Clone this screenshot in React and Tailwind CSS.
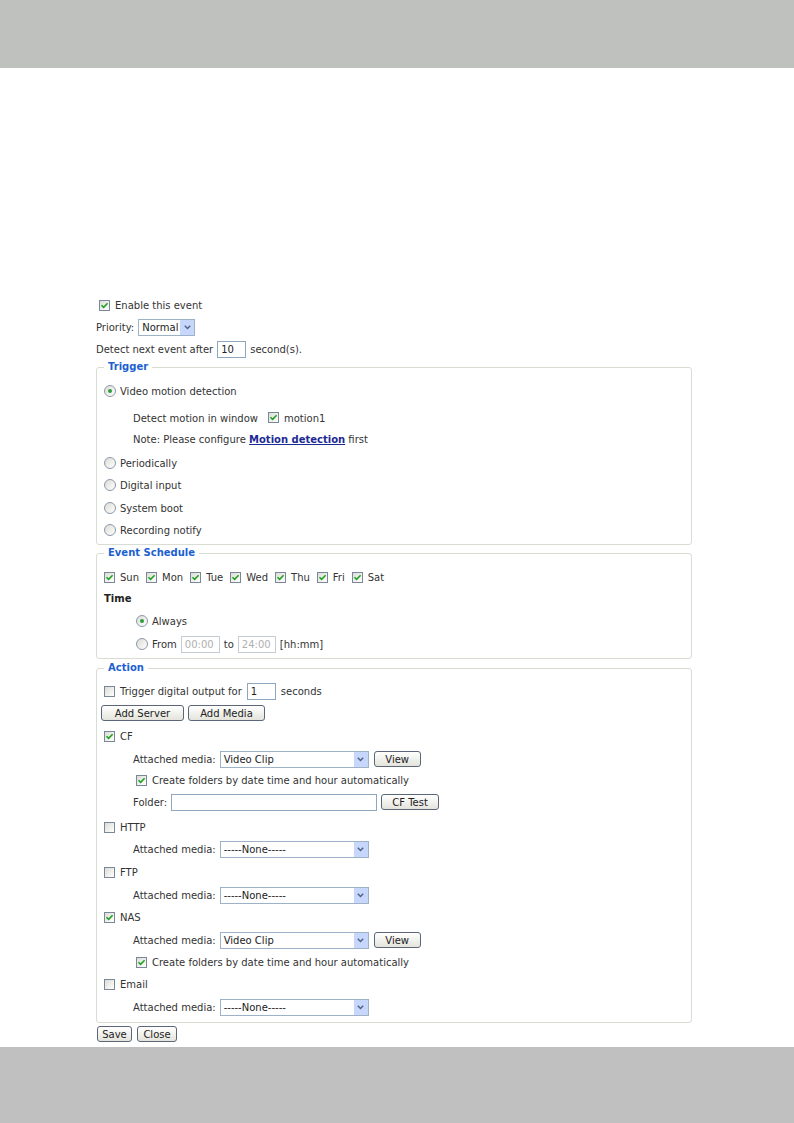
import React from 'react';

const Check = ({ checked }) => (
  <span className="inline-flex w-[11px] h-[11px] shrink-0 items-center justify-center border border-[#7a8799] bg-linear-to-br from-[#dcdcd6] to-white">
    {checked && (
      <svg width="9" height="9" viewBox="0 0 9 9">
        <path d="M1.5 4.3 L3.6 6.4 L7.6 2.2" fill="none" stroke="#21a121" strokeWidth="1.6" />
      </svg>
    )}
  </span>
);

const Radio = ({ checked }) => (
  <span className="inline-flex w-[12px] h-[12px] shrink-0 items-center justify-center rounded-full border border-[#8c98a8] bg-linear-to-br from-[#dcdcd6] to-white">
    {checked && <span className="w-[4px] h-[4px] rounded-full bg-[#2f9e3a]" />}
  </span>
);

const Select = ({ value, className }) => (
  <div className={`flex h-[17px] shrink-0 border border-[#9db1c7] bg-white ${className}`}>
    <span className="flex-1 pl-[3px] leading-[15px] text-[#222]">{value}</span>
    <span className="flex w-[15px] items-center justify-center bg-[#c6d7fb] border-l border-white">
      <svg width="7" height="5" viewBox="0 0 7 5">
        <path d="M0.8 0.8 L3.5 3.6 L6.2 0.8" fill="none" stroke="#4d6185" strokeWidth="1.4" />
      </svg>
    </span>
  </div>
);

const TextBox = ({ value, className, disabled }) => (
  <span
    className={`inline-flex h-[17px] shrink-0 items-center border bg-white pl-[3px] ${
      disabled ? 'border-[#c5ccd4] text-[#b0b0b0]' : 'border-[#8ea7bf] text-[#222]'
    } ${className}`}
  >
    {value}
  </span>
);

const Btn = ({ children, className }) => (
  <span
    className={`inline-flex h-[16px] shrink-0 items-center justify-center rounded-[3px] border border-[#5b6779] bg-linear-to-b from-white to-[#e4e4dc] text-[#222] ${className}`}
  >
    {children}
  </span>
);

const Row = ({ children, className = '' }) => (
  <div className={`flex items-center ${className}`}>{children}</div>
);

const Legend = ({ children }) => (
  <legend className="px-[4px] font-bold text-[#1b5fd1] leading-[14px]">{children}</legend>
);

const days = ['Sun', 'Mon', 'Tue', 'Wed', 'Thu', 'Fri', 'Sat'];

export default function App() {
  return (
    <div className="flex h-[1123px] flex-col bg-white font-['DejaVu_Sans',sans-serif] text-[10px] text-[#333]">
      <div className="h-[68px] bg-[#bfc1bf]" />

      <div className="flex-1 pl-[96px] pt-[226px]">
        <div className="w-[596px]">
          <Row className="h-[22px] gap-[5px] pl-[3px]">
            <Check checked />
            <span>Enable this event</span>
          </Row>
          <Row className="h-[22px] gap-[4px]">
            <span>Priority:</span>
            <Select value="Normal" className="w-[57px]" />
          </Row>
          <Row className="h-[22px] gap-[4px]">
            <span>Detect next event after</span>
            <TextBox value="10" className="w-[29px]" />
            <span>second(s).</span>
          </Row>

          <fieldset className="rounded-[3px] border border-[#d9dcd3] px-[7px] pb-[3px]">
            <Legend>Trigger</Legend>
            <Row className="mt-[6px] h-[22px] gap-[4px]">
              <Radio checked />
              <span>Video motion detection</span>
            </Row>
            <Row className="mt-[5px] h-[22px] pl-[29px]">
              <span>Detect motion in window</span>
              <span className="ml-[10px]"><Check checked /></span>
              <span className="ml-[5px]">motion1</span>
            </Row>
            <Row className="h-[20px] pl-[29px]">
              <span>
                Note: Please configure{' '}
                <span className="font-bold text-[#1c2a94] underline">Motion detection</span> first
              </span>
            </Row>
            {['Periodically', 'Digital input', 'System boot', 'Recording notify'].map((t, i) => (
              <Row key={t} className={`h-[22px] gap-[4px] ${i === 0 ? 'mt-[3px]' : i === 2 ? 'mt-[1px]' : ''}`}>
                <Radio />
                <span>{t}</span>
              </Row>
            ))}
          </fieldset>

          <fieldset className="mt-[1px] rounded-[3px] border border-[#d9dcd3] px-[7px] pb-[3px]">
            <Legend>Event Schedule</Legend>
            <Row className="mt-[6px] h-[22px]">
              {days.map((d) => (
                <span key={d} className="mr-[7px] flex items-center gap-[5px]">
                  <Check checked />
                  <span>{d}</span>
                </span>
              ))}
            </Row>
            <Row className="h-[20px] font-bold text-[#222]">Time</Row>
            <Row className="mt-[2px] h-[22px] gap-[4px] pl-[32px]">
              <Radio checked />
              <span>Always</span>
            </Row>
            <Row className="mt-[1px] h-[22px] gap-[4px] pl-[32px]">
              <Radio />
              <span>From</span>
              <TextBox value="00:00" disabled className="w-[39px]" />
              <span>to</span>
              <TextBox value="24:00" disabled className="w-[38px]" />
              <span>[hh:mm]</span>
            </Row>
          </fieldset>

          <fieldset className="mt-[2px] rounded-[3px] border border-[#d9dcd3] px-[7px] pb-[4px]">
            <Legend>Action</Legend>
            <Row className="mt-[5px] h-[22px] gap-[5px]">
              <Check />
              <span>Trigger digital output for</span>
              <TextBox value="1" className="w-[29px]" />
              <span>seconds</span>
            </Row>
            <Row className="-ml-[3px] h-[22px] gap-[4px]">
              <Btn className="w-[83px]">Add Server</Btn>
              <Btn className="w-[77px]">Add Media</Btn>
            </Row>

            <Row className="mt-[1px] h-[22px] gap-[5px]">
              <Check checked />
              <span>CF</span>
            </Row>
            <Row className="mt-[1px] h-[22px] gap-[4px] pl-[29px]">
              <span>Attached media:</span>
              <Select value="Video Clip" className="w-[149px]" />
              <Btn className="ml-[1px] w-[47px]">View</Btn>
            </Row>
            <Row className="h-[21px] gap-[5px] pl-[32px]">
              <Check checked />
              <span>Create folders by date time and hour automatically</span>
            </Row>
            <Row className="h-[22px] gap-[4px] pl-[29px]">
              <span>Folder:</span>
              <TextBox value="" className="w-[206px]" />
              <Btn className="w-[58px]">CF Test</Btn>
            </Row>

            <Row className="mt-[3px] h-[22px] gap-[5px]">
              <Check />
              <span>HTTP</span>
            </Row>
            <Row className="h-[22px] gap-[4px] pl-[29px]">
              <span>Attached media:</span>
              <Select value="-----None-----" className="w-[149px]" />
            </Row>

            <Row className="mt-[1px] h-[22px] gap-[5px]">
              <Check />
              <span>FTP</span>
            </Row>
            <Row className="mt-[1px] h-[22px] gap-[4px] pl-[29px]">
              <span>Attached media:</span>
              <Select value="-----None-----" className="w-[149px]" />
            </Row>

            <Row className="h-[22px] gap-[5px]">
              <Check checked />
              <span>NAS</span>
            </Row>
            <Row className="mt-[1px] h-[22px] gap-[4px] pl-[29px]">
              <span>Attached media:</span>
              <Select value="Video Clip" className="w-[149px]" />
              <Btn className="ml-[1px] w-[47px]">View</Btn>
            </Row>
            <Row className="h-[22px] gap-[5px] pl-[32px]">
              <Check checked />
              <span>Create folders by date time and hour automatically</span>
            </Row>

            <Row className="h-[22px] gap-[5px]">
              <Check />
              <span>Email</span>
            </Row>
            <Row className="mt-[1px] h-[22px] gap-[4px] pl-[29px]">
              <span>Attached media:</span>
              <Select value="-----None-----" className="w-[149px]" />
            </Row>
          </fieldset>

          <Row className="mt-[2px] h-[18px] gap-[5px] pl-[1px]">
            <Btn className="h-[15px] w-[35px]">Save</Btn>
            <Btn className="h-[15px] w-[40px]">Close</Btn>
          </Row>
        </div>
      </div>

      <div className="h-[76px] bg-[#bfc0bf]" />
    </div>
  );
}
